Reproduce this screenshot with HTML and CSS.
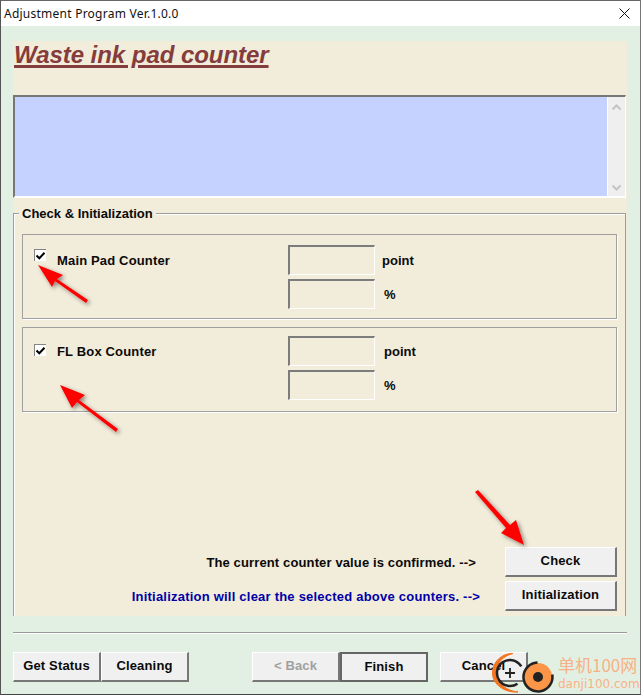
FILE: index.html
```html
<!DOCTYPE html>
<html lang="en">
<head>
<meta charset="utf-8">
<title>Adjustment Program Ver.1.0.0</title>
<link rel="stylesheet" href="styles.css">
</head>
<body>
<div class="window">
  <header class="titlebar">
    <span class="title">Adjustment Program Ver.1.0.0</span>
    <svg class="close" width="11" height="11" viewBox="0 0 11 11"><path d="M.5.5l10 10M10.5.5l-10 10" stroke="#111" fill="none"/></svg>
  </header>
  <main class="client">
    <section class="panel">
      <h1 class="heading">Waste ink pad counter</h1>
      <div class="log">
        <div class="log-area"></div>
        <div class="scrollbar">
          <svg width="9" height="7" viewBox="0 0 9 7"><path d="M.5 5.500l4-4 4 4" stroke="#c4c4c4" stroke-width="2" fill="none"/></svg>
          <svg width="9" height="7" viewBox="0 0 9 7"><path d="M.5 1.500l4 4 4-4" stroke="#c4c4c4" stroke-width="2" fill="none"/></svg>
        </div>
      </div>
      <div class="fieldset">
        <div class="legend">Check &amp; Initialization</div>
        <div class="group">
          <div class="check-row">
            <span class="checkbox"><svg width="9" height="8" viewBox="0 0 9 8"><path d="M.5 3.500l2.800 2.800 5.200-5.500" stroke="#000" stroke-width="2" fill="none"/></svg></span>
            <span class="label">Main Pad Counter</span>
          </div>
          <div class="values">
            <div class="value-row"><span class="field"></span><span class="unit">point</span></div>
            <div class="value-row"><span class="field"></span><span class="unit pct">%</span></div>
          </div>
        </div>
        <div class="group">
          <div class="check-row">
            <span class="checkbox"><svg width="9" height="8" viewBox="0 0 9 8"><path d="M.5 3.500l2.800 2.800 5.200-5.500" stroke="#000" stroke-width="2" fill="none"/></svg></span>
            <span class="label">FL Box Counter</span>
          </div>
          <div class="values">
            <div class="value-row"><span class="field"></span><span class="unit pct">point</span></div>
            <div class="value-row"><span class="field"></span><span class="unit pct">%</span></div>
          </div>
        </div>
        <div class="actions">
          <div class="action-row"><span class="action-text">The current counter value is confirmed. --&gt;</span><button class="btn action-btn">Check</button></div>
          <div class="action-row"><span class="action-text blue">Initialization will clear the selected above counters. --&gt;</span><button class="btn action-btn">Initialization</button></div>
        </div>
      </div>
    </section>
    <hr class="separator">
    <footer class="footer">
      <button class="btn">Get Status</button>
      <button class="btn">Cleaning</button>
      <button class="btn disabled back">&lt; Back</button>
      <button class="btn finish">Finish</button>
      <button class="btn cancel">Cancel</button>
    </footer>
  </main>

  <svg class="arrows" width="641" height="695" viewBox="0 0 641 695">
    <defs>
      <filter id="sh" x="-30%" y="-30%" width="160%" height="160%"><feDropShadow dx="2" dy="2" stdDeviation="2" flood-color="#000" flood-opacity=".45"/></filter>
    </defs>
    <g fill="#f00" filter="url(#sh)">
      <path d="M38 265l25 10-6 4 31 21-2 3-31-22-3 6z"/>
      <path d="M60 385l25 10-6 5 39 29-2 3-39-30-5 6z"/>
      <path d="M524 545l-8-25-6 5-32-35-3 2 31 36-5 5z"/>
    </g>
  </svg>

  <div class="watermark">
    <svg class="wm-logo" width="72" height="45" viewBox="0 0 72 45">
      <path d="M25 3.500C14 3 4 12 4.500 24C5 34 16 43 30 42C20 41 8 34 8 23C8 13 15 6 25 3.500Z" fill="#f4741f" stroke="#f4741f"/>
      <circle cx="22" cy="23" r="13" stroke="#222" stroke-width="2.500" fill="none" stroke-dasharray="62 20" transform="rotate(55 22 23)"/>
      <path d="M17 23h10M22 18v10" stroke="#222" stroke-width="1.800"/>
      <circle cx="50" cy="27" r="14" fill="#fb9548"/>
      <circle cx="50" cy="27" r="14.500" stroke="#222" stroke-width="2.500" fill="none" stroke-dasharray="70 22" transform="rotate(-10 50 27)"/>
      <circle cx="50" cy="27" r="5" fill="#222"/>
    </svg>
    <div class="wm-text">
      <span class="wm-cn">单机100网</span>
      <span class="wm-url">danji100.com</span>
    </div>
  </div>
</div>
</body>
</html>
```

FILE: styles.css
```css
* { box-sizing: border-box; }
html, body { margin: 0; padding: 0; }
body { width: 641px; height: 695px; overflow: hidden; background: #e2f0e3; font-family: "Liberation Sans", Arial, sans-serif; }
.window { position: relative; width: 641px; height: 695px; background: #e2f0e3; border-left: 1px solid #555; border-right: 1px solid #777; border-top: 1px solid #666; border-bottom: 1px solid #444; }
.titlebar { height: 25px; background: #fff; display: flex; align-items: center; justify-content: space-between; padding: 0 10px 0 3px; }
.title { font: 12px "Noto Sans", "Open Sans", sans-serif; color: #111; letter-spacing: .02em; }
.close { display: block; }
.client { padding: 15px 12px 0 12px; }
.panel { width: 614px; height: 575px; background: #f2ecda; display: flex; flex-direction: column; }
.heading { margin: 0; padding-left: 1px; height: 54px; font: italic bold 24px/27px "Liberation Sans", Arial, sans-serif; letter-spacing: -.05px; color: #843c3c; text-decoration: underline; text-decoration-thickness: 3px; text-underline-offset: 2px; }
.log { height: 103px; width: 613px; display: flex; border-top: 2px solid #777; border-left: 2px solid #777; border-right: 1px solid #fff; border-bottom: 2px solid #fff; }
.log-area { flex: 1; background: #c5d1fe; border-right: 1px solid #fff; }
.scrollbar { width: 17px; background: #efefef; display: flex; flex-direction: column; justify-content: space-between; align-items: center; padding: 7px 0 5px; }
.scrollbar svg { display: block; }
.fieldset { position: relative; margin: 15px 0 0 0; width: 613px; height: 403px; border: 1px solid #9c9c9c; border-bottom: 0; box-shadow: inset 1px 1px 0 #fff; padding: 20px 8px 0 8px; }
.legend { position: absolute; left: 5px; top: -8px; background: #f2ecda; padding: 0 3px; font-size: 13px; line-height: 15px; font-weight: bold; color: #0a0a0a; }
.group { height: 85px; width: 595px; margin-bottom: 8px; border: 1px solid #a0a0a0; box-shadow: 1px 1px 0 #fff; position: relative; display: flex; }
.check-row { width: 265px; padding: 14px 0 0 11px; display: flex; align-items: flex-start; }
.checkbox { width: 12px; height: 12px; background: #fff; border-top: 1px solid #858585; border-left: 1px solid #858585; display: flex; align-items: center; justify-content: center; flex: none; }
.checkbox svg { display: block; }
.label { margin: 4px 0 0 11px; font-size: 13px; line-height: 15px; font-weight: bold; letter-spacing: .16px; color: #0a0a0a; }
.group + .group .checkbox { margin-top: 2px; }
.group + .group .label { margin-top: 2px; }
.values { padding-top: 10px; display: flex; flex-direction: column; gap: 4px; }
.group + .group .values { padding-top: 8px; }
.value-row { display: flex; align-items: center; }
.field { width: 87px; height: 30px; border-top: 2px solid #7c7c7c; border-left: 2px solid #7c7c7c; border-right: 1px solid #fff; border-bottom: 1px solid #fff; }
.unit { margin-left: 7px; font-size: 13px; font-weight: bold; color: #0a0a0a; }
.unit.pct { margin-left: 9px; }
.actions { position: absolute; right: 8px; bottom: 5px; display: flex; flex-direction: column; gap: 4px; }
.action-row { display: flex; align-items: center; justify-content: flex-end; gap: 29px; }
.action-row + .action-row { gap: 25px; }
.action-text { font-size: 13px; font-weight: bold; color: #0a0a0a; letter-spacing: .13px; }
.blue { color: #0000a8; letter-spacing: .22px; }
.btn { display: block; width: 88px; height: 30px; padding: 0 0 2px; background: #f0f0f0; border: 0; border-top: 1px solid #fff; border-left: 1px solid #fff; border-right: 2px solid #777; border-bottom: 2px solid #777; font: bold 13px "Liberation Sans", Arial, sans-serif; letter-spacing: .16px; color: #0a0a0a; }
.action-btn { width: 112px; }
.disabled { color: #a0a0a0; }
.separator { margin: 16px 0 0 0; width: 614px; height: 2px; border: 0; border-top: 1px solid #999; border-bottom: 1px solid #fff; }
.footer { margin-top: 18px; display: flex; }
.back { margin-left: 63px; }
.finish { border: 2px solid #666; }
.cancel { margin-left: 12px; }
.arrows { position: absolute; left: -1px; top: -1px; pointer-events: none; }
.watermark { position: absolute; left: 487px; top: 649px; }
.wm-logo { position: absolute; left: 0; top: 0; display: block; }
.wm-text { position: absolute; left: 70px; top: 3px; width: 82px; display: flex; flex-direction: column; color: #f9b086; white-space: nowrap; }
.wm-cn { font: 17px/23px "Noto Sans CJK SC", sans-serif; }
.wm-url { font: 12px/16px "DejaVu Sans", sans-serif; }
```
